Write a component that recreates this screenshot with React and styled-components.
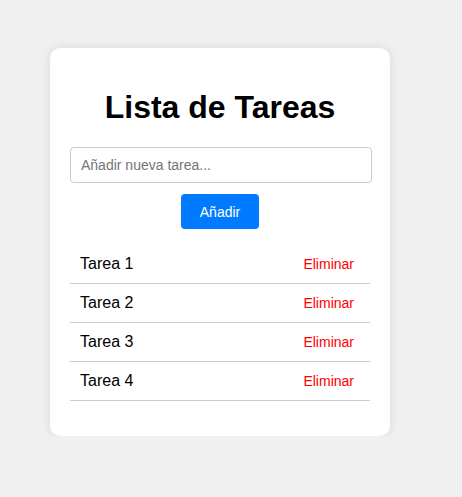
import React, { useState } from 'react';
import styled, { createGlobalStyle } from 'styled-components';

const GlobalStyle = createGlobalStyle`
  html, body {
    margin: 0;
    padding: 0;
    background: #f0f0f0;
    font-family: Arial, "Liberation Sans", sans-serif;
  }
`;

const Page = styled.div`
  padding: 48px 0 0 50px;
`;

const Card = styled.div`
  width: 300px;
  padding: 20px 20px 20px;
  background: #fff;
  border-radius: 10px;
  box-shadow: 0 0 10px rgba(0, 0, 0, 0.1);
`;

const Title = styled.h1`
  margin: 21px 0;
  font-size: 32px;
  text-align: center;
  color: #000;
`;

const Input = styled.input`
  display: block;
  box-sizing: border-box;
  width: 302px;
  height: 36px;
  padding: 0 10px;
  border: 1px solid #ccc;
  border-radius: 4px;
  font-size: 14px;
  font-family: inherit;
  outline: none;
  &::placeholder { color: #757575; }
`;

const AddButton = styled.button`
  display: block;
  margin: 11px auto 0;
  height: 35px;
  padding: 0 19px;
  background: #007bff;
  color: #fff;
  border: none;
  border-radius: 4px;
  font-size: 14px;
  font-family: inherit;
  cursor: pointer;
`;

const List = styled.ul`
  list-style: none;
  margin: 16px 0 15px;
  padding: 0;
`;

const Item = styled.li`
  display: flex;
  align-items: center;
  justify-content: space-between;
  height: 38px;
  padding: 0 10px;
  border-bottom: 1px solid #ccc;
  font-size: 16px;
  color: #000;
`;

const RemoveButton = styled.button`
  background: none;
  border: none;
  padding: 1px 6px;
  color: #ff0000;
  font-size: 14px;
  font-family: inherit;
  cursor: pointer;
`;

export default function App() {
  const [tasks, setTasks] = useState(['Tarea 1', 'Tarea 2', 'Tarea 3', 'Tarea 4']);
  const [text, setText] = useState('');

  const add = () => {
    if (!text.trim()) return;
    setTasks([...tasks, text.trim()]);
    setText('');
  };

  return (
    <>
      <GlobalStyle />
      <Page>
        <Card>
          <Title>Lista de Tareas</Title>
          <Input
            placeholder="Añadir nueva tarea..."
            value={text}
            onChange={e => setText(e.target.value)}
          />
          <AddButton onClick={add}>Añadir</AddButton>
          <List>
            {tasks.map((t, i) => (
              <Item key={i}>
                {t}
                <RemoveButton onClick={() => setTasks(tasks.filter((_, j) => j !== i))}>
                  Eliminar
                </RemoveButton>
              </Item>
            ))}
          </List>
        </Card>
      </Page>
    </>
  );
}
